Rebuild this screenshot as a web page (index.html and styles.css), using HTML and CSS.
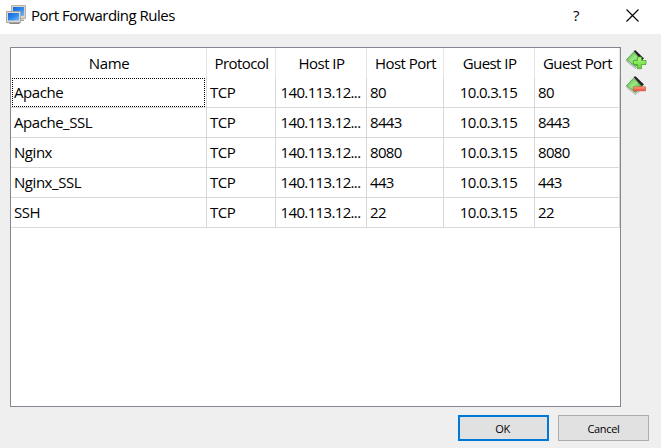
FILE: index.html
```html
<!DOCTYPE html>
<html lang="en">
<head>
<meta charset="utf-8">
<title>Port Forwarding Rules</title>
<link rel="stylesheet" href="styles.css">
</head>
<body>
<div class="dialog">
  <header class="titlebar">
    <svg class="app-icon" width="22" height="20" viewBox="0 0 22 20">
      <defs>
        <linearGradient id="screen" x1="0" y1="0" x2="1" y2="1">
          <stop offset="0" stop-color="#1268d8"/><stop offset=".5" stop-color="#2f87ec"/><stop offset="1" stop-color="#72baff"/>
        </linearGradient>
      </defs>
      <path d="M10 14.5h8v1.500h-8z" fill="#a6a29c"/>
      <path d="M5.500 .5h14v13h-14z" fill="#d9d5cd" stroke="#b5b1aa"/>
      <path d="M7 2h11v9h-11z" fill="url(#screen)"/>
      <path d="M4 17.500h9l1 1.500h-11z" fill="#8b8780"/>
      <path d="M.5 6.500h14v11h-14z" fill="#dedad2" stroke="#aaa69f"/>
      <path d="M2 8h11v7.500h-11z" fill="url(#screen)"/>
    </svg>
    <h1 class="title">Port Forwarding Rules</h1>
    <span class="help">?</span>
    <svg class="close" width="13" height="13" viewBox="0 0 13 13"><path d="M.5.5l12 12M12.500.5l-12 12" stroke="#000" stroke-width="1.100" fill="none"/></svg>
  </header>
  <main class="content">
    <div class="table-frame">
      <table class="rules">
        <colgroup><col class="c-name"><col class="c-proto"><col class="c-hip"><col class="c-hport"><col class="c-gip"><col class="c-gport"></colgroup>
        <thead><tr><th>Name</th><th>Protocol</th><th>Host IP</th><th>Host Port</th><th>Guest IP</th><th>Guest Port</th></tr></thead>
        <tbody>
          <tr><td><div class="focus">Apache</div></td><td>TCP</td><td class="ip">140.113.12...</td><td class="port">80</td><td class="ip">10.0.3.15</td><td class="port">80</td></tr>
          <tr><td>Apache_SSL</td><td>TCP</td><td class="ip">140.113.12...</td><td class="port">8443</td><td class="ip">10.0.3.15</td><td class="port">8443</td></tr>
          <tr><td>Nginx</td><td>TCP</td><td class="ip">140.113.12...</td><td class="port">8080</td><td class="ip">10.0.3.15</td><td class="port">8080</td></tr>
          <tr><td>Nginx_SSL</td><td>TCP</td><td class="ip">140.113.12...</td><td class="port">443</td><td class="ip">10.0.3.15</td><td class="port">443</td></tr>
          <tr><td>SSH</td><td>TCP</td><td class="ip">140.113.12...</td><td class="port">22</td><td class="ip">10.0.3.15</td><td class="port">22</td></tr>
        </tbody>
      </table>
    </div>
    <div class="tools">
      <svg width="21" height="20" viewBox="0 0 21 20">
        <defs>
          <linearGradient id="leaf" x1="0" y1="0" x2="1" y2="1">
            <stop offset="0" stop-color="#3fb431"/><stop offset=".45" stop-color="#9be884"/><stop offset="1" stop-color="#2f9a24"/>
          </linearGradient>
          <linearGradient id="plus" x1="0" y1="0" x2="0" y2="1">
            <stop offset="0" stop-color="#b4f78a"/><stop offset="1" stop-color="#5ad82a"/>
          </linearGradient>
          <linearGradient id="minus" x1="0" y1="0" x2="0" y2="1">
            <stop offset="0" stop-color="#ffa58f"/><stop offset="1" stop-color="#f0492c"/>
          </linearGradient>
        </defs>
        <path d="M7.500 1L9.500.3 18 8.500 15.500 10.500z" fill="#222"/>
        <path d="M.8 10v1.500l8.700 7 7-6v-2z" fill="#d8d8d8" stroke="#777" stroke-width=".5"/>
        <path d="M7.500 2.200L15.500 10l-6 6.500L.6 9.500z" fill="url(#leaf)" stroke="#2d8423" stroke-width=".6"/>
        <path d="M11.500 7h4v3.500h4.500v4h-4.500v4.200h-4v-4.200H7.500v-4h4z" fill="url(#plus)" stroke="#3f9e25" stroke-width=".7"/>
      </svg>
      <svg width="21" height="20" viewBox="0 0 21 20">
        <path d="M7.500 1L9.500.3 18 8.500 15.500 10.500z" fill="#222"/>
        <path d="M.8 10v1.500l8.700 7 7-6v-2z" fill="#d8d8d8" stroke="#777" stroke-width=".5"/>
        <path d="M7.500 2.200L15.500 10l-6 6.500L.6 9.500z" fill="url(#leaf)" stroke="#2d8423" stroke-width=".6"/>
        <path d="M7.500 10.800h12v4h-12z" fill="url(#minus)" stroke="#cf5a42" stroke-width=".7"/>
      </svg>
    </div>
  </main>
  <footer class="actions">
    <button class="btn primary">OK</button>
    <button class="btn">Cancel</button>
  </footer>
</div>
</body>
</html>
```
FILE: styles.css
```css
* { box-sizing: border-box; }
body {
  margin: 0;
  font: 15px/20px "Open Sans", "Noto Sans", sans-serif;
  letter-spacing: -0.45px;
  color: #000;
}
.dialog {
  display: flex;
  flex-direction: column;
  width: 661px;
  height: 448px;
  background: #efefef;
  overflow: hidden;
}
.titlebar {
  display: flex;
  align-items: center;
  height: 34px;
  padding: 0 22px 4px 6px;
  background: #fff;
}
.app-icon { margin-right: 3px; }
.title { margin: 0; font-size: 15px; font-weight: 400; flex: 1; letter-spacing: -0.5px; }
.help { margin-right: 47px; }
.content {
  display: flex;
  gap: 5px;
  padding: 13px 0 0 10px;
}
.table-frame {
  width: 611px;
  height: 360px;
  border: 1px solid #828790;
  background: #fff;
}
.rules {
  width: 609px;
  table-layout: fixed;
  border-collapse: separate;
  border-spacing: 0;
}
.c-name { width: 196px; }
.c-proto { width: 69px; }
.c-hip { width: 91px; }
.c-hport { width: 77px; }
.c-gip { width: 91px; }
.c-gport { width: 85px; }
th {
  height: 30px;
  padding: 0 0 0 1px;
  border-right: 1px solid #e5e5e5;
  font-weight: 400;
  text-align: center;
  letter-spacing: -0.55px;
}
th:first-child { letter-spacing: -0.4px; }
td {
  height: 30px;
  padding: 0 0 2px 3px;
  border-right: 1px solid #d8d8d8;
  border-bottom: 1px solid #d8d8d8;
  white-space: nowrap;
}
.ip { padding: 0 1px 2px 0; text-align: center; letter-spacing: -0.65px; }
.port { letter-spacing: -0.7px; }
.focus {
  width: 193px;
  height: 29px;
  margin: 0 0 -2px -2px;
  padding-left: 1px;
  border: 1px dotted #000;
  line-height: 26px;
}
.tools {
  display: flex;
  flex-direction: column;
  gap: 6px;
  padding-top: 3px;
}
.tools svg { display: block; }
.actions {
  display: flex;
  justify-content: flex-end;
  gap: 9px;
  padding: 8px 12px 0 0;
}
.btn {
  width: 91px;
  height: 26px;
  padding: 2px 0 0;
  border: 1px solid #adadad;
  background: #e1e1e1;
  font: 11px/22px "Open Sans", "Noto Sans", sans-serif;
  letter-spacing: -0.3px;
  color: #000;
}
.primary { border: 2px solid #0078d7; padding: 1px 2px 0 0; }
```
